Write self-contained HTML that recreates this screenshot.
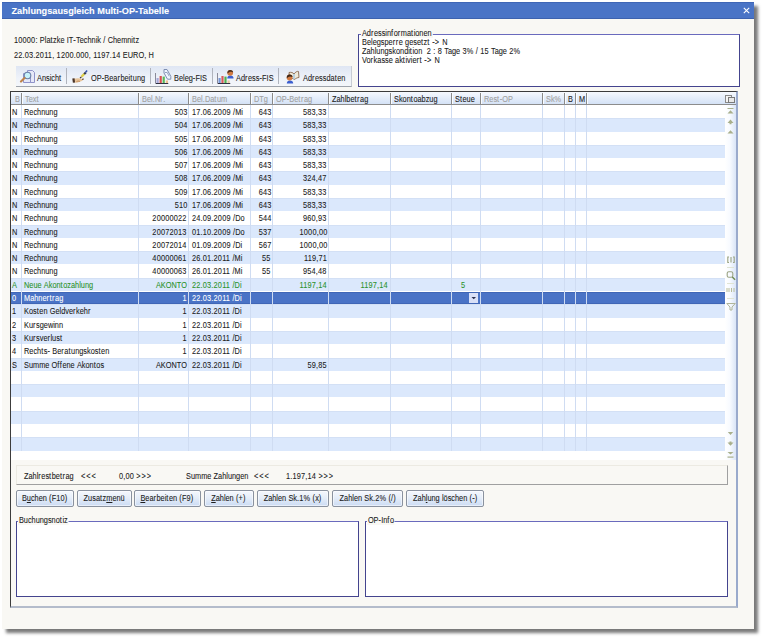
<!DOCTYPE html>
<html><head><meta charset="utf-8"><style>
*{margin:0;padding:0;box-sizing:border-box}
html,body{width:764px;height:639px;overflow:hidden;background:#fff;font-family:"Liberation Sans",sans-serif;font-size:8.3px;color:#202020;letter-spacing:0.21px;-webkit-text-stroke:0.08px currentColor}
.a{position:absolute}
.t{position:absolute;white-space:pre;line-height:10px;transform:scaleX(0.887);transform-origin:0 0}
.t.r{transform-origin:100% 0}
#dlg{left:2px;top:2px;width:752px;height:627px;background:#f9f8f4;box-shadow:4px 4px 3px 0 rgba(0,0,0,.52)}
#title{left:2px;top:2px;width:752px;height:17px;background:#4a74c6;border-top:1px solid #3f66b6;border-bottom:1px solid #3d62ae}
#title span{position:absolute;left:9.5px;top:3px;font-size:9.2px;font-weight:bold;color:#fff;line-height:11px;letter-spacing:0px}
.gb{position:absolute;border:1px solid #44448e;border-top-color:#6a6abd;background:#fff}
.gl{position:absolute;background:#f9f8f4;padding:0 1px;line-height:9px;white-space:pre}
.hdr{position:absolute;top:92px;height:12px;background:linear-gradient(#f6f9fe,#d4e2f6)}
.hs{position:absolute;top:93px;height:11px;width:1px;background:#8a8a8a;box-shadow:1px 0 0 #fbfdff}
.gh{color:#a0a0a0}
.row{position:absolute;left:11px;width:714px}
.str{background:#dbe8fc;box-shadow:inset 0 1px 0 #d3e0f5}
.sel{background:#4a73c6;border-top:1px solid #4066b6;border-bottom:1px solid #4066b6}
.vl{position:absolute;top:105px;height:345.5px;width:1px;background:#cfdcf2}
.r{text-align:right}
.btn{position:absolute;top:490px;height:17px;border:1px solid #8a929f;border-radius:2px;background:linear-gradient(#f5f8fd,#e6eef9 45%,#cbdbf3);box-shadow:inset 0 0 0 1px rgba(255,255,255,.55);text-align:center;line-height:15px;white-space:pre}
u{text-decoration-thickness:0.7px;text-underline-offset:1px}
.tb{position:absolute;top:68px;width:1px;height:16px;background:#b0b4bd}
svg{position:absolute;overflow:visible}
.bt{display:inline-block;transform:scaleX(0.887);transform-origin:50% 0}
.gl{transform:scaleX(0.887);transform-origin:0 0}
i{font-style:normal}
.L{letter-spacing:0px}
.R{letter-spacing:0.62px}
.G{letter-spacing:1.0px}

</style></head><body>
<div class="a" id="dlg"></div><div class="a" id="title"><span>Zahlungsausgleich Multi-OP-Tabelle</span></div><svg style="left:742px;top:5.5px" width="9" height="9" viewBox="0 0 9 9"><path d="M1.8 1.8L7.2 7.2M7.2 1.8L1.8 7.2" stroke="#fff" stroke-width="1.1"/></svg><div class="t" style="left:14px;top:35px">10000: <i class="L">Pla<i class="R">t</i>zke</i> <i class="L">IT</i>-<i class="L">Technik</i> / <i class="L">Chemni<i class="R">t</i>z</i></div><div class="t" style="left:14px;top:50px">22.03.2011, 1200.000, 1197.14 <i class="L">EURO</i>, <i class="L">H</i></div><div class="gb" style="left:358px;top:34px;width:382px;height:53px"></div><div class="gl wd" style="left:361px;top:29px"><i class="L">Ad<i class="R">r</i>essin<i class="R">f</i>o<i class="R">r</i>ma<i class="R">t</i>ionen</i></div><div class="t wd" style="left:362px;top:38px;line-height:9px"><i class="L">Belegspe<i class="R">rr</i>e</i> <i class="L">gese<i class="R">t</i>z<i class="R">t</i></i> -<i class="G">&gt;</i> <i class="L">N</i><br><i class="L">Zahlungskondi<i class="R">t</i>ion</i>  2 : 8 <i class="L">Tage</i> 3% / 15 <i class="L">Tage</i> 2%<br><i class="L">Vo<i class="R">r</i>kasse</i> <i class="L">ak<i class="R">t</i>ivie<i class="R">rt</i></i> -<i class="G">&gt;</i> <i class="L">N</i></div><div class="a" style="left:16px;top:66px;width:336px;height:21px;background:linear-gradient(#dfe6f3,#eef2f9 60%,#f4f6fa);border-bottom:1px solid #9ea3ab;border-right:1px solid #c8ccd4"></div><div class="tb" style="left:66px"></div><div class="tb" style="left:150px"></div><div class="tb" style="left:212px"></div><div class="tb" style="left:278px"></div><div class="t" style="left:37px;top:72.5px"><i class="L">Ansich<i class="R">t</i></i></div><div class="t" style="left:91px;top:72.5px"><i class="L">OP</i>-<i class="L">Bea<i class="R">r</i>bei<i class="R">t</i>ung</i></div><div class="t" style="left:174px;top:72.5px"><i class="L">Beleg</i>-<i class="L">FIS</i></div><div class="t" style="left:235.5px;top:72.5px"><i class="L">Ad<i class="R">r</i>ess</i>-<i class="L">FIS</i></div><div class="t" style="left:303px;top:72.5px"><i class="L">Ad<i class="R">r</i>essda<i class="R">t</i>en</i></div>
<svg style="left:0;top:0" width="764" height="639">
 <!-- Ansicht: docs + magnifier -->
 <path d="M27.5 70.5h5l2 2v10h-7z" fill="#e6e8f8" stroke="#8f93c9"/>
 <path d="M23.5 73.5h5l2 2v7h-7z" fill="#e6e8f8" stroke="#8f93c9"/>
 <circle cx="27.5" cy="75.5" r="3.3" fill="#c6f2fa" stroke="#6a7fa8" stroke-width="1.1"/>
 <path d="M21 81.5L24.5 78" stroke="#c0844a" stroke-width="2.2" stroke-linecap="round"/>
 <!-- OP-Bearbeitung: hand + pen -->
 <path d="M74 78.8c2.5-.8 5.5-.8 8.3.2l1 .6c-.3.9-1.2 1.4-2.2 1.6l-3.5 1.3c-1.3.3-2.6.2-3.6-.2z" fill="#e8c49a"/>
 <path d="M72.3 78.6l2.2-.3l.6 4.2l-2.2.2z" fill="#4a3428"/>
 <path d="M76.5 81.5c1.2-.5 2.5-.5 3.5 0" stroke="#b88050" stroke-width=".9" fill="none"/>
 <path d="M82.2 79.5l1.4-.6" stroke="#503a2a" stroke-width="1.2"/>
 <path d="M80 78.2l1.6-1.6" stroke="#3a3028" stroke-width="1.1"/>
 <path d="M81.6 76.6l2.8-2.8" stroke="#e0d048" stroke-width="2.3"/>
 <path d="M84.2 74l1.6-1.6" stroke="#303850" stroke-width="2.1"/>
 <path d="M85.6 72.3l1.5-1.8" stroke="#3552b0" stroke-width="1.6"/>
 <!-- Beleg-FIS: chart + doc -->
 <path d="M164 69.5h3l3.8 6.8v2.9h-3.3l-3.5-6.2z" fill="#f0f5ff" stroke="#7f8fb2" stroke-width="1"/><path d="M165 72.5l2.2 0l2 3.8" stroke="#8a9aba" stroke-width=".9" fill="none"/>
 <path d="M155.5 73v10.5h13" stroke="#8a8a9a" fill="none"/>
 <rect x="156.5" y="78" width="2.2" height="5" fill="#a8a8d8"/>
 <rect x="159.6" y="76" width="2.2" height="7" fill="#d85050"/>
 <rect x="162.6" y="76.6" width="2.2" height="6.4" fill="#5ab85a"/>
 <rect x="165.8" y="80.4" width="2.2" height="2.6" fill="#f0c090"/>
 <path d="M156 83.5h12" stroke="#303040"/>
 <!-- Adress-FIS: chart + person -->
 <path d="M217.5 73v10.5h13" stroke="#8a8a9a" fill="none"/>
 <rect x="218.5" y="78" width="2.2" height="5" fill="#7898d8"/>
 <rect x="221.4" y="76" width="2.2" height="7" fill="#d85a5a"/>
 <rect x="224.4" y="76.6" width="2.2" height="6.4" fill="#50b050"/>
 <rect x="227.5" y="80.4" width="2.2" height="2.6" fill="#e8c8a0"/>
 <path d="M218 83.5h12" stroke="#303040"/>
 <path d="M227.2 78.6c0-2 1.2-3 3.2-3s3.2 1 3.2 3z" fill="#3b5fd0"/>
 <circle cx="230.2" cy="72.8" r="2.9" fill="#d27a42"/><path d="M227.4 73.5c-.3-2.2 1-3.6 2.8-3.6s3 1.2 2.9 2.6c-1.2-.9-3.6-1-4.6.2z" fill="#4a3020"/>
 <!-- Adressdaten: book + person -->
 <path d="M289 72.5c2-.5 4 0 5 1.5c1.5-2 3-3 4.5-2.5l.5 6c-1.5 0-3 .8-4.5 2c-1.5-1-3-1.5-5-1.3z" fill="#f0ead8" stroke="#8a6a50" stroke-width=".9"/>
 <path d="M294 74v5" stroke="#a8c8e0" stroke-width="1.5"/>
 <path d="M286.8 83.4c0-2 1.2-3 3.2-3s3.2 1 3.2 3z" fill="#3b5fd0"/>
 <circle cx="289.6" cy="77.5" r="2.9" fill="#d27a42"/><path d="M286.8 78.5c-.4-2.4 1-4 2.8-4s3 1.2 2.9 2.6c-1.2-.9-3.6-1-4.6.2z" fill="#3a2618"/>
</svg><div class="a" style="left:10px;top:91px;width:728px;height:517px;border-top:1px solid #3c3c3c;border-left:1px solid #3c3c3c;border-right:2px solid #9aaacc;border-bottom:2px solid #b4bccb"></div><div class="a" style="left:11px;top:105px;width:714px;height:355px;background:#fff"></div><div class="a" style="left:725px;top:105px;width:11px;height:355px;background:linear-gradient(90deg,#fff 0%,#f7faff 45%,#dae5f7 100%)"></div><div class="hdr" style="left:11px;width:725px"></div><div class="a" style="left:11px;top:104px;width:725px;height:1px;background:#8c8c8c"></div><div class="row str" style="top:118.29px;height:13.29px"></div><div class="row str" style="top:144.87px;height:13.29px"></div><div class="row str" style="top:171.45px;height:13.29px"></div><div class="row str" style="top:198.03px;height:13.29px"></div><div class="row str" style="top:224.61px;height:13.29px"></div><div class="row str" style="top:251.19px;height:13.29px"></div><div class="row str" style="top:277.77px;height:13.29px"></div><div class="row sel" style="top:292.06px;height:12.29px"></div><div class="row str" style="top:304.35px;height:13.29px"></div><div class="row str" style="top:330.93px;height:13.29px"></div><div class="row str" style="top:357.51px;height:13.29px"></div><div class="row str" style="top:384.09px;height:13.29px"></div><div class="row str" style="top:410.67px;height:13.29px"></div><div class="row str" style="top:437.25px;height:13.29px"></div><div class="vl" style="left:21px"></div><div class="vl" style="left:138px"></div><div class="vl" style="left:188px"></div><div class="vl" style="left:250px"></div><div class="vl" style="left:272px"></div><div class="vl" style="left:328px"></div><div class="vl" style="left:390px"></div><div class="vl" style="left:451px"></div><div class="vl" style="left:480px"></div><div class="vl" style="left:542px"></div><div class="vl" style="left:564px"></div><div class="vl" style="left:575px"></div><div class="vl" style="left:586px"></div><div class="hs" style="left:21px"></div><div class="t gh" style="left:14.5px;top:93.5px"><i class="L">B</i></div><div class="hs" style="left:138px"></div><div class="t gh" style="left:24.5px;top:93.5px"><i class="L">Tex<i class="R">t</i></i></div><div class="hs" style="left:188px"></div><div class="t gh" style="left:141.5px;top:93.5px"><i class="L">Bel</i>.<i class="L">N<i class="R">r</i></i>.</div><div class="hs" style="left:250px"></div><div class="t gh" style="left:191.5px;top:93.5px"><i class="L">Bel</i>.<i class="L">Da<i class="R">t</i>um</i></div><div class="hs" style="left:272px"></div><div class="t gh" style="left:253.5px;top:93.5px"><i class="L">DTg</i></div><div class="hs" style="left:328px"></div><div class="t gh" style="left:275.5px;top:93.5px"><i class="L">OP</i>-<i class="L">Be<i class="R">tr</i>ag</i></div><div class="hs" style="left:390px"></div><div class="t " style="left:331.5px;top:93.5px"><i class="L">Zahlbe<i class="R">tr</i>ag</i></div><div class="hs" style="left:451px"></div><div class="t " style="left:393.5px;top:93.5px"><i class="L">Skon<i class="R">t</i>oabzug</i></div><div class="hs" style="left:480px"></div><div class="t " style="left:454.5px;top:93.5px"><i class="L">S<i class="R">t</i>eue</i></div><div class="hs" style="left:542px"></div><div class="t gh" style="left:483.5px;top:93.5px"><i class="L">Res<i class="R">t</i></i>-<i class="L">OP</i></div><div class="hs" style="left:564px"></div><div class="t gh" style="left:545.5px;top:93.5px"><i class="L">Sk</i>%</div><div class="hs" style="left:575px"></div><div class="t " style="left:567.5px;top:93.5px"><i class="L">B</i></div><div class="hs" style="left:586px"></div><div class="t " style="left:578.5px;top:93.5px"><i class="L">M</i></div>
<svg style="left:0;top:0" width="764" height="639">
 <rect x="725.5" y="95.5" width="6" height="7" fill="#f4f4f4" stroke="#8a8a8a"/>
 <rect x="728.5" y="97.5" width="6" height="5" fill="#e8e8e8" stroke="#7a7a7a"/>
 <g fill="#a9b08c">
  <rect x="727.5" y="108" width="6" height="1"/>
  <path d="M727.5 113.5l3-3.2l3 3.2z"/>
  <path d="M727.5 123l3-3.4l3 3.4h-2v1.2h-2v-1.2z"/>
  <path d="M727.5 133.5l3-3.3l3 3.3z"/>
  <path d="M727.8 432l2.7 2.9l2.7-2.9z"/>
  <path d="M727.5 442.5l3 3.3l3-3.3h-2v-1h-2v1z"/>
  <path d="M727.5 452l3 2.6l3-2.6z"/>
  <rect x="727.5" y="456.5" width="6" height="1.2"/>
 </g>
 <g fill="none" stroke="#9aa382" stroke-width="1">
  <path d="M729 257h-1.2v5.5h1.2M733 257h1.2v5.5h-1.2M731 257v5.5" stroke-width="1.1"/>
  <rect x="727.2" y="271.7" width="5.6" height="5.6" rx="1.6" stroke-width="1.1"/>
  <path d="M732.3 277l2.8 2.8" stroke="#6e8a50" stroke-width="1.4"/>
  <path d="M727 288v4M729 288v4M731.5 288v4M734 288v4" stroke="#b8bc98"/>
  <path d="M726.8 303.5h8.5l-3.3 3.5v3h-2v-3z" stroke="#b0b59a"/>
 </g>
 <g stroke="#e0e4d4"><path d="M727 267.5h7M727 283.5h7M727 298.5h7"/></g>
</svg><div class="t" style="left:12px;top:107.00px;"><i class="L">N</i></div><div class="t" style="left:24px;top:107.00px;"><i class="L">Rechnung</i></div><div class="t r" style="right:577.0px;top:107.00px;">503</div><div class="t" style="left:192px;top:107.00px;">17.06.2009 /<i class="L">Mi</i></div><div class="t r" style="right:493.0px;top:107.00px;">643</div><div class="t r" style="right:437.0px;top:107.00px;">583,33</div><div class="t" style="left:12px;top:120.29px;"><i class="L">N</i></div><div class="t" style="left:24px;top:120.29px;"><i class="L">Rechnung</i></div><div class="t r" style="right:577.0px;top:120.29px;">504</div><div class="t" style="left:192px;top:120.29px;">17.06.2009 /<i class="L">Mi</i></div><div class="t r" style="right:493.0px;top:120.29px;">643</div><div class="t r" style="right:437.0px;top:120.29px;">583,33</div><div class="t" style="left:12px;top:133.58px;"><i class="L">N</i></div><div class="t" style="left:24px;top:133.58px;"><i class="L">Rechnung</i></div><div class="t r" style="right:577.0px;top:133.58px;">505</div><div class="t" style="left:192px;top:133.58px;">17.06.2009 /<i class="L">Mi</i></div><div class="t r" style="right:493.0px;top:133.58px;">643</div><div class="t r" style="right:437.0px;top:133.58px;">583,33</div><div class="t" style="left:12px;top:146.87px;"><i class="L">N</i></div><div class="t" style="left:24px;top:146.87px;"><i class="L">Rechnung</i></div><div class="t r" style="right:577.0px;top:146.87px;">506</div><div class="t" style="left:192px;top:146.87px;">17.06.2009 /<i class="L">Mi</i></div><div class="t r" style="right:493.0px;top:146.87px;">643</div><div class="t r" style="right:437.0px;top:146.87px;">583,33</div><div class="t" style="left:12px;top:160.16px;"><i class="L">N</i></div><div class="t" style="left:24px;top:160.16px;"><i class="L">Rechnung</i></div><div class="t r" style="right:577.0px;top:160.16px;">507</div><div class="t" style="left:192px;top:160.16px;">17.06.2009 /<i class="L">Mi</i></div><div class="t r" style="right:493.0px;top:160.16px;">643</div><div class="t r" style="right:437.0px;top:160.16px;">583,33</div><div class="t" style="left:12px;top:173.45px;"><i class="L">N</i></div><div class="t" style="left:24px;top:173.45px;"><i class="L">Rechnung</i></div><div class="t r" style="right:577.0px;top:173.45px;">508</div><div class="t" style="left:192px;top:173.45px;">17.06.2009 /<i class="L">Mi</i></div><div class="t r" style="right:493.0px;top:173.45px;">643</div><div class="t r" style="right:437.0px;top:173.45px;">324,47</div><div class="t" style="left:12px;top:186.74px;"><i class="L">N</i></div><div class="t" style="left:24px;top:186.74px;"><i class="L">Rechnung</i></div><div class="t r" style="right:577.0px;top:186.74px;">509</div><div class="t" style="left:192px;top:186.74px;">17.06.2009 /<i class="L">Mi</i></div><div class="t r" style="right:493.0px;top:186.74px;">643</div><div class="t r" style="right:437.0px;top:186.74px;">583,33</div><div class="t" style="left:12px;top:200.03px;"><i class="L">N</i></div><div class="t" style="left:24px;top:200.03px;"><i class="L">Rechnung</i></div><div class="t r" style="right:577.0px;top:200.03px;">510</div><div class="t" style="left:192px;top:200.03px;">17.06.2009 /<i class="L">Mi</i></div><div class="t r" style="right:493.0px;top:200.03px;">643</div><div class="t r" style="right:437.0px;top:200.03px;">583,33</div><div class="t" style="left:12px;top:213.32px;"><i class="L">N</i></div><div class="t" style="left:24px;top:213.32px;"><i class="L">Rechnung</i></div><div class="t r" style="right:577.0px;top:213.32px;">20000022</div><div class="t" style="left:192px;top:213.32px;">24.09.2009 /<i class="L">Do</i></div><div class="t r" style="right:493.0px;top:213.32px;">544</div><div class="t r" style="right:437.0px;top:213.32px;">960,93</div><div class="t" style="left:12px;top:226.61px;"><i class="L">N</i></div><div class="t" style="left:24px;top:226.61px;"><i class="L">Rechnung</i></div><div class="t r" style="right:577.0px;top:226.61px;">20072013</div><div class="t" style="left:192px;top:226.61px;">01.10.2009 /<i class="L">Do</i></div><div class="t r" style="right:493.0px;top:226.61px;">537</div><div class="t r" style="right:437.0px;top:226.61px;">1000,00</div><div class="t" style="left:12px;top:239.90px;"><i class="L">N</i></div><div class="t" style="left:24px;top:239.90px;"><i class="L">Rechnung</i></div><div class="t r" style="right:577.0px;top:239.90px;">20072014</div><div class="t" style="left:192px;top:239.90px;">01.09.2009 /<i class="L">Di</i></div><div class="t r" style="right:493.0px;top:239.90px;">567</div><div class="t r" style="right:437.0px;top:239.90px;">1000,00</div><div class="t" style="left:12px;top:253.19px;"><i class="L">N</i></div><div class="t" style="left:24px;top:253.19px;"><i class="L">Rechnung</i></div><div class="t r" style="right:577.0px;top:253.19px;">40000061</div><div class="t" style="left:192px;top:253.19px;">26.01.2011 /<i class="L">Mi</i></div><div class="t r" style="right:493.0px;top:253.19px;">55</div><div class="t r" style="right:437.0px;top:253.19px;">119,71</div><div class="t" style="left:12px;top:266.48px;"><i class="L">N</i></div><div class="t" style="left:24px;top:266.48px;"><i class="L">Rechnung</i></div><div class="t r" style="right:577.0px;top:266.48px;">40000063</div><div class="t" style="left:192px;top:266.48px;">26.01.2011 /<i class="L">Mi</i></div><div class="t r" style="right:493.0px;top:266.48px;">55</div><div class="t r" style="right:437.0px;top:266.48px;">954,48</div><div class="t" style="left:12px;top:279.77px;color:#2a922a;"><i class="L">A</i></div><div class="t" style="left:24px;top:279.77px;color:#2a922a;"><i class="L">Neue</i> <i class="L">Akon<i class="R">t</i>ozahlung</i></div><div class="t r" style="right:577.0px;top:279.77px;color:#2a922a;"><i class="L">AKONTO</i></div><div class="t" style="left:192px;top:279.77px;color:#2a922a;">22.03.2011 /<i class="L">Di</i></div><div class="t r" style="right:437.0px;top:279.77px;color:#2a922a;">1197,14</div><div class="t r" style="right:376.0px;top:279.77px;color:#2a922a;">1197,14</div><div class="t" style="left:461px;top:279.77px;color:#2a922a;">5</div><div class="t" style="left:12px;top:293.06px;color:#fff;">0</div><div class="t" style="left:24px;top:293.06px;color:#fff;"><i class="L">Mahne<i class="R">rtr</i>ag</i></div><div class="t r" style="right:577.0px;top:293.06px;color:#fff;">1</div><div class="t" style="left:192px;top:293.06px;color:#fff;">22.03.2011 /<i class="L">Di</i></div><div class="t" style="left:12px;top:306.35px;">1</div><div class="t" style="left:24px;top:306.35px;"><i class="L">Kos<i class="R">t</i>en</i> <i class="L">Geldve<i class="R">r</i>keh<i class="R">r</i></i></div><div class="t r" style="right:577.0px;top:306.35px;">1</div><div class="t" style="left:192px;top:306.35px;">22.03.2011 /<i class="L">Di</i></div><div class="t" style="left:12px;top:319.64px;">2</div><div class="t" style="left:24px;top:319.64px;"><i class="L">Ku<i class="R">r</i>sgewinn</i></div><div class="t r" style="right:577.0px;top:319.64px;">1</div><div class="t" style="left:192px;top:319.64px;">22.03.2011 /<i class="L">Di</i></div><div class="t" style="left:12px;top:332.93px;">3</div><div class="t" style="left:24px;top:332.93px;"><i class="L">Ku<i class="R">r</i>sve<i class="R">r</i>lus<i class="R">t</i></i></div><div class="t r" style="right:577.0px;top:332.93px;">1</div><div class="t" style="left:192px;top:332.93px;">22.03.2011 /<i class="L">Di</i></div><div class="t" style="left:12px;top:346.22px;">4</div><div class="t" style="left:24px;top:346.22px;"><i class="L">Rech<i class="R">t</i>s</i>- <i class="L">Be<i class="R">r</i>a<i class="R">t</i>ungskos<i class="R">t</i>en</i></div><div class="t r" style="right:577.0px;top:346.22px;">1</div><div class="t" style="left:192px;top:346.22px;">22.03.2011 /<i class="L">Di</i></div><div class="t" style="left:12px;top:359.51px;"><i class="L">S</i></div><div class="t" style="left:24px;top:359.51px;"><i class="L">Summe</i> <i class="L">O<i class="R">ff</i>ene</i> <i class="L">Akon<i class="R">t</i>os</i></div><div class="t r" style="right:577.0px;top:359.51px;"><i class="L">AKONTO</i></div><div class="t" style="left:192px;top:359.51px;">22.03.2011 /<i class="L">Di</i></div><div class="t r" style="right:437.0px;top:359.51px;">59,85</div><div class="a" style="left:469px;top:292.56px;width:9px;height:10px;background:#d9e0f7"></div><svg style="left:0;top:0" width="764" height="639"><path d="M471.5 297.06h4.5l-2.25 2.3z" fill="#2a3050"/></svg><div class="a" style="left:16px;top:465px;width:712px;height:20px;border-top:1px solid #eceae2;border-left:1px solid #eceae2;border-right:1px solid #a0a0a0;border-bottom:1px solid #a0a0a0"></div><div class="t wd" style="left:24px;top:471px"><i class="L">Zahl<i class="R">r</i>es<i class="R">t</i>be<i class="R">tr</i>ag</i></div><div class="t wd" style="left:81px;top:471px"><i class="G">&lt;</i><i class="G">&lt;</i><i class="G">&lt;</i></div><div class="t wd" style="left:119px;top:471px">0,00 <i class="G">&gt;</i><i class="G">&gt;</i><i class="G">&gt;</i></div><div class="t" style="left:186px;top:471px"><i class="L">Summe</i> <i class="L">Zahlungen</i></div><div class="t wd" style="left:254px;top:471px"><i class="G">&lt;</i><i class="G">&lt;</i><i class="G">&lt;</i></div><div class="t wd" style="left:285.5px;top:471px">1.197,14 <i class="G">&gt;</i><i class="G">&gt;</i><i class="G">&gt;</i></div><div class="btn" style="left:15.5px;width:58.5px"><span class="bt"><i class="L">B</i><u><i class="L">u</i></u><i class="L">chen</i> (<i class="L">F</i>10)</span></div><div class="btn" style="left:77px;width:54.5px"><span class="bt"><i class="L">Zusa<i class="R">t</i>z</i><u><i class="L">m</i></u><i class="L">enü</i></span></div><div class="btn" style="left:134px;width:66.5px"><span class="bt"><u><i class="L">B</i></u><i class="L">ea<i class="R">r</i>bei<i class="R">t</i>en</i> (<i class="L">F</i>9)</span></div><div class="btn" style="left:203.5px;width:50.0px"><span class="bt"><u><i class="L">Z</i></u><i class="L">ahlen</i> (+)</span></div><div class="btn" style="left:256.5px;width:72.0px"><span class="bt"><i class="L">Zahlen</i> <i class="L">Sk</i>.1% (<i class="L">x</i>)</span></div><div class="btn" style="left:332px;width:71.0px"><span class="bt"><i class="L">Zahlen</i> <i class="L">Sk</i>.2% (/)</span></div><div class="btn" style="left:406px;width:78.0px"><span class="bt"><i class="L">Zah</i><u><i class="L">l</i></u><i class="L">ung</i> <i class="L">löschen</i> (-)</span></div><div class="gb" style="left:16px;top:521px;width:343px;height:76px"></div><div class="gl wd" style="left:18px;top:516px"><i class="L">Buchungsno<i class="R">t</i>iz</i></div><div class="gb" style="left:365px;top:521px;width:363px;height:76px"></div><div class="gl wd" style="left:367px;top:516px"><i class="L">OP</i>-<i class="L">In<i class="R">f</i>o</i></div>
</body></html>
